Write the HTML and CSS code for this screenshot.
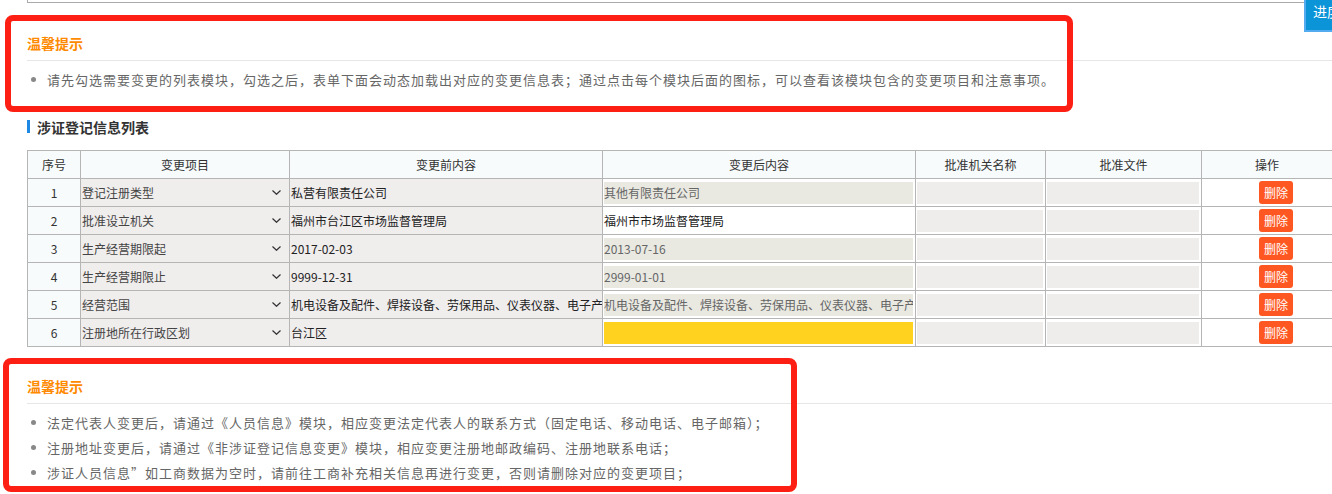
FILE: index.html
```html
<!DOCTYPE html>
<html lang="zh-CN">
<head>
    <meta charset="UTF-8">
    <meta name="viewport" content="width=device-width, initial-scale=1.0">
    <title>涉证登记信息变更</title>
    <link rel="stylesheet" href="styles.css">
</head>
<body>
    <div class="page">
        <div class="top-box"></div>

        <div class="tips tips-first">
            <div class="tips-title">温馨提示</div>
            <ul class="tips-list">
                <li>请先勾选需要变更的列表模块，勾选之后，表单下面会动态加载出对应的变更信息表；通过点击每个模块后面的图标，可以查看该模块包含的变更项目和注意事项。</li>
            </ul>
        </div>

        <h3 class="section-title">涉证登记信息列表</h3>

        <table class="change-table">
            <colgroup>
                <col style="width: 53px">
                <col style="width: 209px">
                <col style="width: 313px">
                <col style="width: 313px">
                <col style="width: 130px">
                <col style="width: 156px">
                <col style="width: 131px">
            </colgroup>
            <thead>
                <tr>
                    <th>序号</th>
                    <th>变更项目</th>
                    <th>变更前内容</th>
                    <th>变更后内容</th>
                    <th>批准机关名称</th>
                    <th>批准文件</th>
                    <th>操作</th>
                </tr>
            </thead>
            <tbody>
                <tr>
                    <td class="num">1</td>
                    <td class="select-cell"><div class="select"><span>登记注册类型</span><svg width="9" height="5" viewBox="0 0 9 5"><polyline points="0.5,0.5 4.5,4.3 8.5,0.5" fill="none" stroke="#333" stroke-width="1.2"/></svg></div></td>
                    <td class="before">私营有限责任公司</td>
                    <td><div class="field readonly">其他有限责任公司</div></td>
                    <td><div class="field"></div></td>
                    <td><div class="field"></div></td>
                    <td class="op"><button class="btn-del">删除</button></td>
                </tr>
                <tr>
                    <td class="num">2</td>
                    <td class="select-cell"><div class="select"><span>批准设立机关</span><svg width="9" height="5" viewBox="0 0 9 5"><polyline points="0.5,0.5 4.5,4.3 8.5,0.5" fill="none" stroke="#333" stroke-width="1.2"/></svg></div></td>
                    <td class="before">福州市台江区市场监督管理局</td>
                    <td><div class="field editable">福州市市场监督管理局</div></td>
                    <td><div class="field"></div></td>
                    <td><div class="field"></div></td>
                    <td class="op"><button class="btn-del">删除</button></td>
                </tr>
                <tr>
                    <td class="num">3</td>
                    <td class="select-cell"><div class="select"><span>生产经营期限起</span><svg width="9" height="5" viewBox="0 0 9 5"><polyline points="0.5,0.5 4.5,4.3 8.5,0.5" fill="none" stroke="#333" stroke-width="1.2"/></svg></div></td>
                    <td class="before">2017-02-03</td>
                    <td><div class="field readonly">2013-07-16</div></td>
                    <td><div class="field"></div></td>
                    <td><div class="field"></div></td>
                    <td class="op"><button class="btn-del">删除</button></td>
                </tr>
                <tr>
                    <td class="num">4</td>
                    <td class="select-cell"><div class="select"><span>生产经营期限止</span><svg width="9" height="5" viewBox="0 0 9 5"><polyline points="0.5,0.5 4.5,4.3 8.5,0.5" fill="none" stroke="#333" stroke-width="1.2"/></svg></div></td>
                    <td class="before">9999-12-31</td>
                    <td><div class="field readonly">2999-01-01</div></td>
                    <td><div class="field"></div></td>
                    <td><div class="field"></div></td>
                    <td class="op"><button class="btn-del">删除</button></td>
                </tr>
                <tr>
                    <td class="num">5</td>
                    <td class="select-cell"><div class="select"><span>经营范围</span><svg width="9" height="5" viewBox="0 0 9 5"><polyline points="0.5,0.5 4.5,4.3 8.5,0.5" fill="none" stroke="#333" stroke-width="1.2"/></svg></div></td>
                    <td class="before">机电设备及配件、焊接设备、劳保用品、仪表仪器、电子产品</td>
                    <td><div class="field readonly">机电设备及配件、焊接设备、劳保用品、仪表仪器、电子产品</div></td>
                    <td><div class="field"></div></td>
                    <td><div class="field"></div></td>
                    <td class="op"><button class="btn-del">删除</button></td>
                </tr>
                <tr>
                    <td class="num">6</td>
                    <td class="select-cell"><div class="select"><span>注册地所在行政区划</span><svg width="9" height="5" viewBox="0 0 9 5"><polyline points="0.5,0.5 4.5,4.3 8.5,0.5" fill="none" stroke="#333" stroke-width="1.2"/></svg></div></td>
                    <td class="before">台江区</td>
                    <td><div class="field required"></div></td>
                    <td><div class="field"></div></td>
                    <td><div class="field"></div></td>
                    <td class="op"><button class="btn-del">删除</button></td>
                </tr>
            </tbody>
        </table>

        <div class="tips tips-second">
            <div class="tips-title">温馨提示</div>
            <ul class="tips-list">
                <li>法定代表人变更后，请通过《人员信息》模块，相应变更法定代表人的联系方式（固定电话、移动电话、电子邮箱）；</li>
                <li>注册地址变更后，请通过《非涉证登记信息变更》模块，相应变更注册地邮政编码、注册地联系电话；</li>
                <li>涉证人员信息”如工商数据为空时，请前往工商补充相关信息再进行变更，否则请删除对应的变更项目；</li>
            </ul>
        </div>
    </div>

    <a class="float-btn" href="#">进度查询</a>
</body>
</html>
```

FILE: styles.css
```css
body {
    margin: 0;
    font-family: "Noto Sans CJK SC", "Liberation Sans", sans-serif;
    font-size: 12px;
    color: #333;
    background: #fff;
    overflow: hidden;
}
.page {
    padding: 0 0 30px 27px;
    width: 1305px;
}
.top-box {
    height: 2px;
    border-left: 1px solid #aaa;
    border-right: 1px solid #aaa;
    border-bottom: 1px solid #aaa;
}

/* tips */
.tips {
    position: relative;
}
.tips-first {
    padding-top: 30px;
}
.tips-second {
    padding-top: 29px;
}
.tips-title {
    font-size: 14px;
    font-weight: bold;
    color: #ff8a00;
    line-height: 20px;
    padding-bottom: 7px;
    border-bottom: 1px solid #e6e6e6;
}
.tips-list {
    list-style: none;
    margin: 6px 0 0;
    padding: 0 0 0 20px;
    font-size: 13px;
    letter-spacing: 1px;
    line-height: 25px;
    color: #666;
}
.tips-list li {
    position: relative;
    white-space: nowrap;
}
.tips-list li::before {
    content: "";
    position: absolute;
    left: -16px;
    top: 10px;
    width: 5px;
    height: 5px;
    border-radius: 50%;
    background: #888;
}
/* red annotation frames drawn over the tips */
.tips::after {
    content: "";
    position: absolute;
    box-sizing: border-box;
    border: 6px solid #fd1f14;
    border-radius: 8px;
}
.tips-first::after {
    left: -22px;
    top: 12px;
    width: 1068px;
    height: 97px;
}
.tips-second::after {
    left: -24px;
    top: 11px;
    width: 794px;
    height: 134px;
}

/* section title */
.section-title {
    position: relative;
    margin: 25px 0 13px;
    padding-left: 10px;
    font-size: 14px;
    line-height: 20px;
    color: #333;
}
.section-title::before {
    content: "";
    position: absolute;
    left: 0;
    top: 3px;
    width: 3px;
    height: 13px;
    background: #1e88e5;
}

/* table */
.change-table {
    width: 1305px;
    table-layout: fixed;
    border-collapse: collapse;
}
.change-table th,
.change-table td {
    height: 27px;
    padding: 0;
    border: 1px solid #b5b5b5;
    font-weight: normal;
    white-space: nowrap;
    overflow: hidden;
}
.change-table th {
    background: #f7fbfc;
    color: #333;
    text-align: center;
}
.change-table td.num {
    background: #f7fbfc;
    text-align: center;
    color: #333;
}
.select-cell {
    background: #f0eded;
}
.select {
    display: flex;
    align-items: center;
    justify-content: space-between;
    height: 27px;
    padding: 0 8px 0 1px;
    color: #444;
}
.change-table td.before {
    background: #f0eded;
    color: #222;
    padding-left: 1px;
}
.field {
    height: 22px;
    line-height: 22px;
    margin: 3px 2px 2px 1px;
    background: #efecec;
    overflow: hidden;
    white-space: nowrap;
}
.field.readonly {
    background: #e9e9e2;
    color: #666;
}
.field.editable {
    background: #fff;
    color: #222;
}
.field.required {
    background: #ffd21f;
}
.change-table td.op {
    background: #fff;
    padding-left: 57px;
}
.btn-del {
    display: block;
    width: 34px;
    height: 23px;
    padding: 0;
    border: none;
    border-radius: 3px;
    background: #ff5722;
    color: #fff;
    font-family: inherit;
    font-size: 12px;
    line-height: 23px;
    cursor: pointer;
}

/* floating button at the top right */
.float-btn {
    position: absolute;
    top: 0;
    left: 1304px;
    width: 70px;
    height: 32px;
    box-sizing: border-box;
    padding: 1px 0 0 7px;
    border: 2px solid #52acef;
    border-top: none;
    background: #0b94d8;
    color: #fff;
    font-size: 14px;
    line-height: 20px;
    text-decoration: none;
    white-space: nowrap;
}
```
